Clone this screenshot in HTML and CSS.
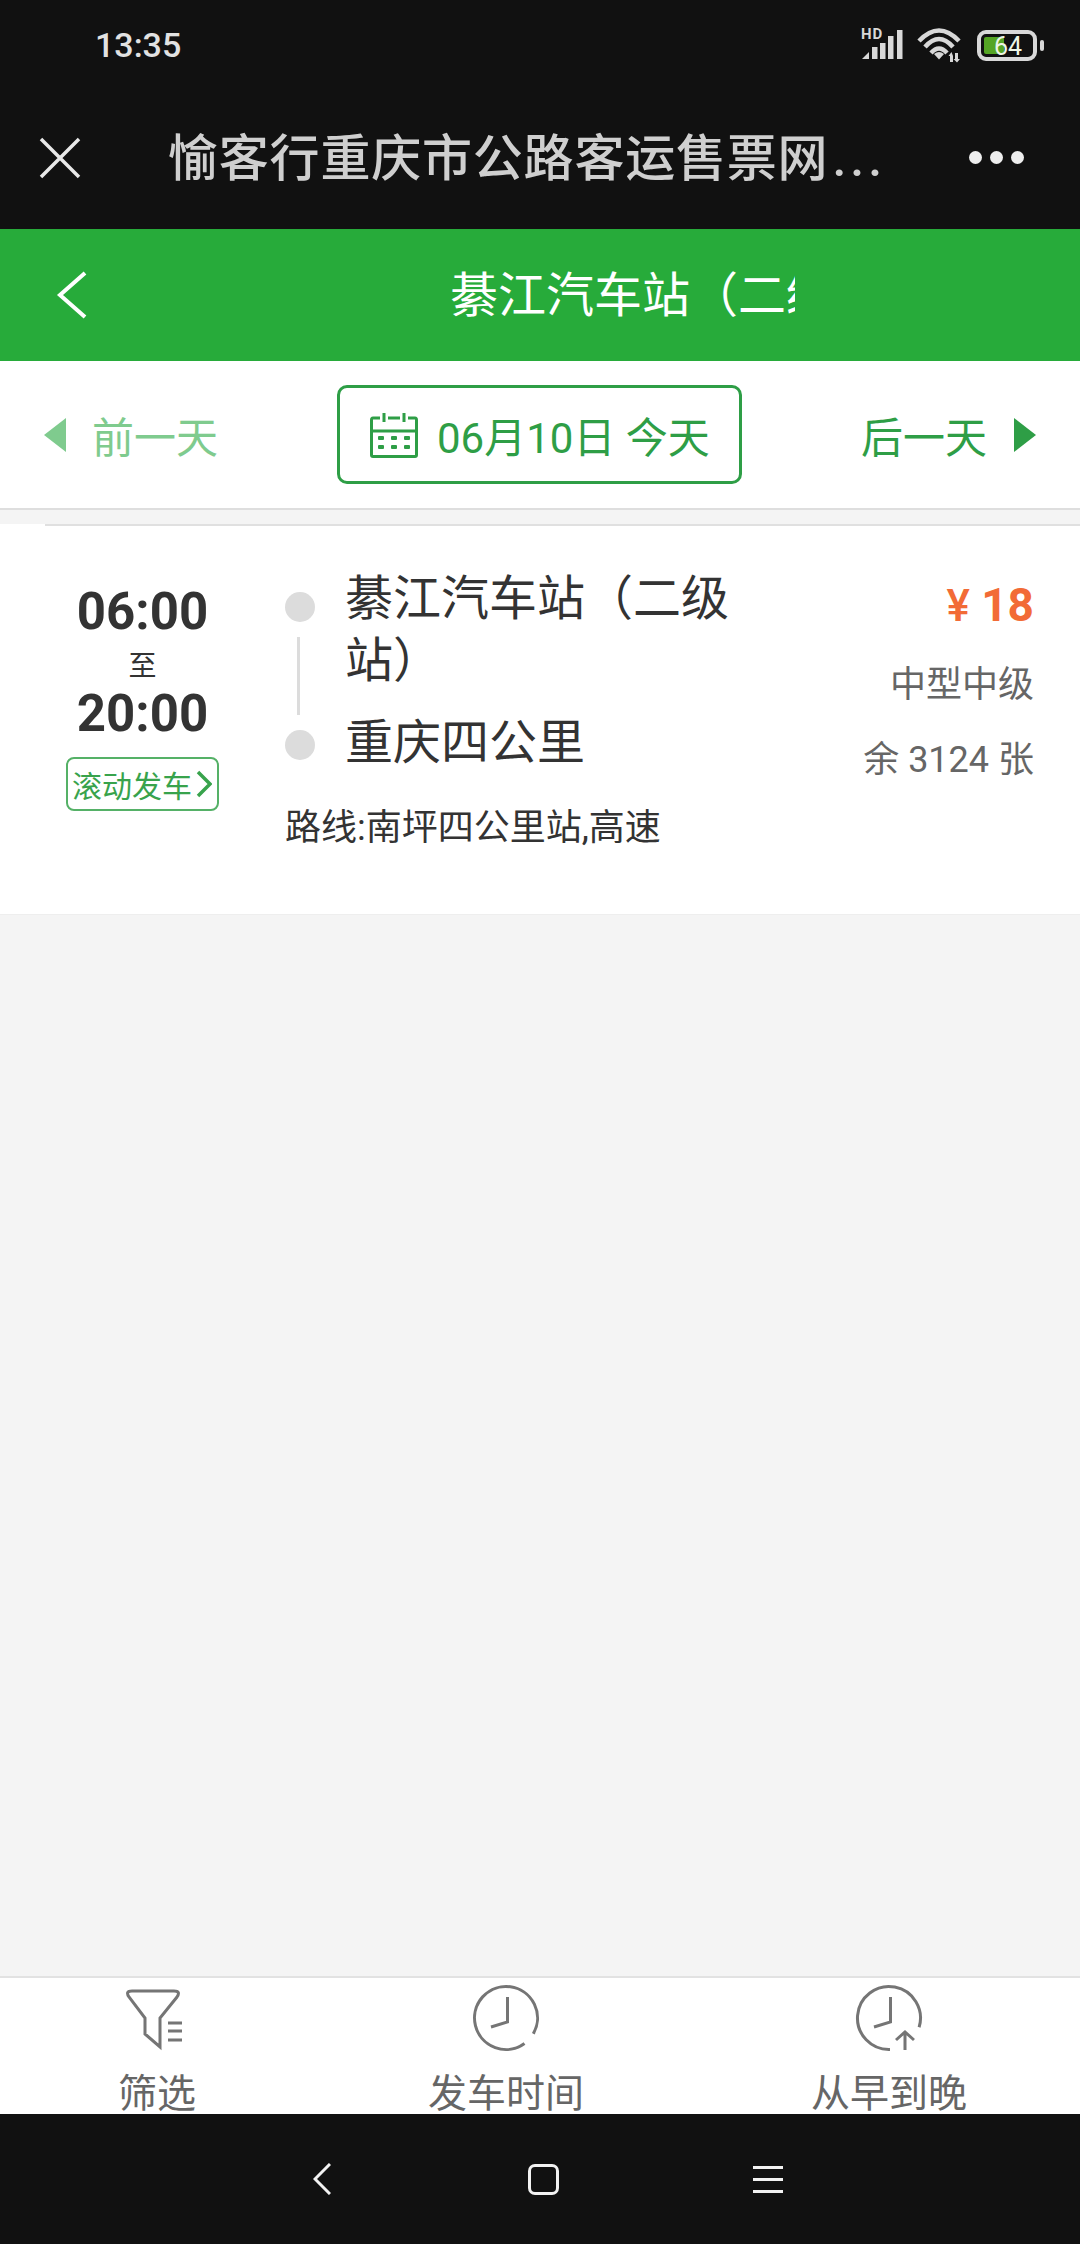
FILE: index.html
```html
<!DOCTYPE html>
<html lang="zh-CN">
<head>
    <meta charset="UTF-8">
    <meta name="viewport" content="width=device-width, initial-scale=1.0">
    <title>愉客行重庆市公路客运售票网站</title>
    <link rel="stylesheet" href="styles.css">
</head>
<body>
    <div class="phone">
        <!-- system status bar + webview title -->
        <header class="top">
            <div class="status">
                <span class="clock">13:35</span>
                <svg class="status-icons" width="184" height="56" viewBox="860 17 184 56">
                    <text class="hd" x="861" y="39">HD</text>
                    <path class="bar" d="M862 59 L869 52 V59 Z"/>
                    <rect class="bar" x="872" y="47" width="5.5" height="12"/>
                    <rect class="bar" x="880" y="43" width="5.5" height="16"/>
                    <rect class="bar" x="888" y="36" width="5.5" height="23"/>
                    <rect class="bar" x="897" y="30" width="5.5" height="29"/>
                    <path class="wave" d="M919 41 Q939 20 959 41"/>
                    <path class="wave" d="M925 47 Q939 31 953 47"/>
                    <path class="wave" d="M931 53 Q939 44 947 53"/>
                    <path class="bar" d="M934 54 Q939 50 944 54 L939 59.500 Z"/>
                    <path class="bar" d="M950 62 V56 H948.500 L951.500 52 L953 56 V62 Z M955 53 V59 H953.500 L957 62.500 L960 59 H958 V53 Z"/>
                    <rect class="batt-shell" x="979" y="32" width="56" height="27" rx="7"/>
                    <rect class="batt-level" x="984" y="37" width="20" height="17" rx="2"/>
                    <rect class="bar" x="1040" y="40" width="4" height="11" rx="2"/>
                    <text class="batt-text" x="994" y="55">64</text>
                </svg>
            </div>
            <div class="webview">
                <svg class="close" width="42" height="42" viewBox="0 0 42 42">
                    <path d="M2 2 L40 40 M40 2 L2 40"/>
                </svg>
                <div class="webview-title">愉客行重庆市公路客运售票网<span class="dots-text">...</span></div>
                <div class="more"><i></i><i></i><i></i></div>
            </div>
        </header>

        <div class="bar-green">
            <svg class="back" width="32" height="48" viewBox="0 0 32 48">
                <path d="M29 2 L4 24 L29 46"/>
            </svg>
            <div class="bar-title">綦江汽车站（二级站）</div>
        </div>

        <div class="datebar">
            <div class="day-link prev"><span class="tri-left"></span>前一天</div>
            <div class="date-box">
                <svg width="48" height="46" viewBox="0 0 48 46">
                    <path class="cal-line" d="M10 6 H3 Q1.500 6 1.500 8 V43 Q1.500 44.500 3 44.500 H45 Q46.500 44.500 46.500 43 V8 Q46.500 6 45 6 H38 M18 6 H30 M1.500 19 H46.500 M14 1 V10 M34 1 V10"/>
                    <rect class="cal-dot" x="8" y="24" width="6" height="4" rx="1"/>
                    <rect class="cal-dot" x="21" y="24" width="6" height="4" rx="1"/>
                    <rect class="cal-dot" x="34" y="24" width="6" height="4" rx="1"/>
                    <rect class="cal-dot" x="8" y="33" width="6" height="4" rx="1"/>
                    <rect class="cal-dot" x="21" y="33" width="6" height="4" rx="1"/>
                    <rect class="cal-dot" x="34" y="33" width="6" height="4" rx="1"/>
                </svg>
                <span>06月10日 今天</span>
            </div>
            <div class="day-link">后一天<span class="tri-right"></span></div>
        </div>

        <main class="list">
            <div class="ticket">
                <div class="ticket-rule"></div>
                <div class="ticket-body">
                    <div class="times">
                        <div class="time">06:00</div>
                        <div class="to">至</div>
                        <div class="time">20:00</div>
                        <div class="tag">滚动发车<svg width="16" height="28" viewBox="0 0 16 28"><path d="M2 2 L14 14 L2 26"/></svg></div>
                    </div>
                    <div class="route">
                        <div class="stops">
                            <div class="rail">
                                <span class="dot"></span>
                                <span class="rail-line"></span>
                                <span class="dot"></span>
                            </div>
                            <div class="names">
                                <div>綦江汽车站（二级站）</div>
                                <div class="name-end">重庆四公里</div>
                            </div>
                        </div>
                        <div class="via">路线:南坪四公里站,高速</div>
                    </div>
                    <div class="price-col">
                        <div class="price"><span class="yen">¥</span> 18</div>
                        <div class="meta">中型中级</div>
                        <div class="meta meta-left">余 3124 张</div>
                    </div>
                </div>
            </div>
        </main>

        <nav class="sortbar">
            <div class="sort-item">
                <svg width="64" height="70" viewBox="0 0 64 70">
                    <path d="M7 8 H49 Q56 8 52 14 L35 35 V64 L20 51 V35 L4 14 Q0 8 7 8 Z"/>
                    <path d="M43 40 H57 M43 48 H57 M43 57 H57"/>
                </svg>
                <span>筛选</span>
            </div>
            <div class="sort-item">
                <svg width="70" height="70" viewBox="0 0 70 70">
                    <path d="M62.300 50.750 A31.500 31.500 0 1 0 53.500 60.500"/>
                    <path d="M36.500 14 V39 L20 44"/>
                </svg>
                <span>发车时间</span>
            </div>
            <div class="sort-item">
                <svg width="70" height="70" viewBox="0 0 70 70">
                    <path d="M65.100 44.200 A31.500 31.500 0 1 0 36 66.500"/>
                    <path d="M36.500 14 V39 L20 44"/>
                    <path d="M51 67 V49 M42 57 L51 49 L60 57"/>
                </svg>
                <span>从早到晚</span>
            </div>
        </nav>

        <!-- android navigation keys -->
        <footer class="keys">
            <svg width="18" height="32" viewBox="0 0 18 32"><path d="M17 1 L2 16 L17 31"/></svg>
            <span class="key-home"></span>
            <span class="key-menu"><i></i><i></i><i></i></span>
        </footer>
    </div>
</body>
</html>
```

FILE: styles.css
```css
* {
    box-sizing: border-box;
}
body {
    margin: 0;
    font-family: Roboto, "Noto Sans CJK SC", sans-serif;
    background-color: #f4f4f4;
}
.phone {
    width: 1080px;
    height: 2244px;
    display: flex;
    flex-direction: column;
    overflow: hidden;
}
svg {
    display: block;
    fill: none;
}

/* top black area */
.top {
    height: 229px;
    background-color: #111;
}
.status {
    height: 90px;
    display: flex;
    align-items: center;
    justify-content: space-between;
    padding: 0 36px 0 95px;
}
.clock {
    font-size: 34px;
    font-weight: 500;
    color: #e2e2e2;
}
.hd {
    font-size: 15px;
    font-weight: 700;
    letter-spacing: 1px;
    fill: #d8d8d8;
}
.bar {
    fill: #d8d8d8;
}
.wave {
    fill: none;
    stroke: #d8d8d8;
    stroke-width: 4.5;
}
.batt-shell {
    stroke: #d8d8d8;
    stroke-width: 4;
}
.batt-level {
    fill: #55a524;
}
.batt-text {
    font-size: 25px;
    fill: #eef6e6;
}
.webview {
    height: 136px;
    display: flex;
    align-items: center;
    padding-left: 39px;
}
.close path {
    stroke: #e8e8e8;
    stroke-width: 3.5;
}
.webview-title {
    width: 712px;
    margin: 0 0 8px 87px;
    font-size: 50px;
    font-weight: 500;
    letter-spacing: 0.8px;
    color: #cfcfcf;
    white-space: nowrap;
}
.dots-text {
    margin-left: 4px;
    letter-spacing: 4px;
}
.more {
    display: flex;
    gap: 8px;
    margin: 0 0 2px 89px;
}
.more i {
    width: 13px;
    height: 13px;
    border-radius: 50%;
    background-color: #eee;
}

/* green header */
.bar-green {
    height: 132px;
    display: flex;
    align-items: center;
    padding-left: 56px;
    background-color: #27ab3a;
}
.back path {
    stroke: #fff;
    stroke-width: 4;
}
.bar-title {
    width: 345px;
    margin: 0 0 8px 362px;
    font-size: 48px;
    color: #fff;
    white-space: nowrap;
    overflow: hidden;
}

/* date switcher */
.datebar {
    height: 149px;
    display: flex;
    align-items: center;
    justify-content: space-between;
    padding: 0 44px;
    background-color: #fff;
    border-bottom: 2px solid #dedede;
}
.day-link {
    display: flex;
    align-items: center;
    font-size: 42px;
    color: #2e9e46;
}
.day-link.prev {
    color: #7fcb8e;
}
.tri-left {
    margin-right: 26px;
    border-top: 17px solid transparent;
    border-bottom: 17px solid transparent;
    border-right: 22px solid #7fcb8e;
}
.tri-right {
    margin-left: 27px;
    border-top: 17px solid transparent;
    border-bottom: 17px solid transparent;
    border-left: 22px solid #2e9e46;
}
.date-box {
    width: 405px;
    height: 99px;
    display: flex;
    align-items: center;
    gap: 19px;
    padding-left: 30px;
    font-size: 42px;
    color: #2e9e46;
    border: 3px solid #2e9e46;
    border-radius: 10px;
}
.cal-line {
    stroke: #2e9e46;
    stroke-width: 3;
}
.cal-dot {
    fill: #2e9e46;
}

/* ticket list */
.list {
    flex: 1;
    padding-top: 13px;
}
.ticket {
    height: 391px;
    background-color: #fff;
    border-bottom: 1px solid #eee;
}
.ticket-rule {
    height: 2px;
    margin: 1px 0 0 45px;
    background-color: #e0e0e0;
}
.ticket-body {
    display: flex;
    color: #333;
}
.times {
    width: 285px;
    display: flex;
    flex-direction: column;
    align-items: center;
    padding-top: 56px;
}
.time {
    font-size: 51px;
    font-weight: 700;
    line-height: 60px;
}
.to {
    font-size: 28px;
    line-height: 44px;
    margin: 3px 0 -5px;
}
.tag {
    width: 153px;
    height: 54px;
    margin-top: 13px;
    display: flex;
    align-items: center;
    gap: 4px;
    padding-left: 4px;
    font-size: 30px;
    color: #38a34c;
    border: 2px solid #55b167;
    border-radius: 8px;
}
.tag path {
    stroke: #38a34c;
    stroke-width: 3.5;
}
.route {
    width: 470px;
    padding-top: 42px;
}
.stops {
    display: flex;
}
.rail {
    width: 30px;
    padding-top: 24px;
    display: flex;
    flex-direction: column;
    align-items: center;
}
.dot {
    width: 30px;
    height: 30px;
    flex: none;
    border-radius: 50%;
    background-color: #dcdcdc;
}
.rail-line {
    width: 3px;
    height: 78px;
    margin: 15px 3px 15px 0;
    background-color: #dcdcdc;
}
.names {
    width: 400px;
    margin-left: 30px;
    font-size: 48px;
    line-height: 62px;
}
.name-end {
    margin-top: 20px;
}
.via {
    margin-top: 29px;
    font-size: 36px;
    line-height: 50px;
}
.price-col {
    flex: 1;
    padding: 49px 46px 0 0;
    text-align: right;
}
.price {
    font-size: 46px;
    font-weight: 700;
    line-height: 60px;
    color: #f26b36;
}
.yen {
    font-size: 44px;
    font-weight: 500;
}
.meta {
    margin-top: 24px;
    font-size: 36px;
    line-height: 50px;
    color: #666;
}
.meta-left {
    margin-top: 25px;
}

/* bottom sort bar */
.sortbar {
    height: 138px;
    display: flex;
    padding: 5px 0 0 118px;
    background-color: #fff;
    border-top: 2px solid #e2e2e2;
}
.sort-item {
    display: flex;
    flex-direction: column;
    align-items: center;
    font-size: 39px;
    line-height: 40px;
    color: #666;
}
.sort-item:nth-child(2) {
    margin-left: 232px;
}
.sort-item:nth-child(3) {
    margin-left: 227px;
}
.sort-item svg {
    margin-bottom: 21px;
}
.sort-item path {
    stroke: #757575;
    stroke-width: 3;
}

/* navigation keys */
.keys {
    height: 130px;
    display: flex;
    align-items: center;
    padding-left: 313px;
    background-color: #111;
}
.keys path {
    stroke: #f2f2f2;
    stroke-width: 3;
}
.key-home {
    width: 31px;
    height: 31px;
    margin-left: 197px;
    border: 3px solid #f2f2f2;
    border-radius: 7px;
}
.key-menu {
    width: 30px;
    margin-left: 194px;
    display: flex;
    flex-direction: column;
    gap: 9px;
}
.key-menu i {
    height: 3px;
    background-color: #f2f2f2;
}
```
